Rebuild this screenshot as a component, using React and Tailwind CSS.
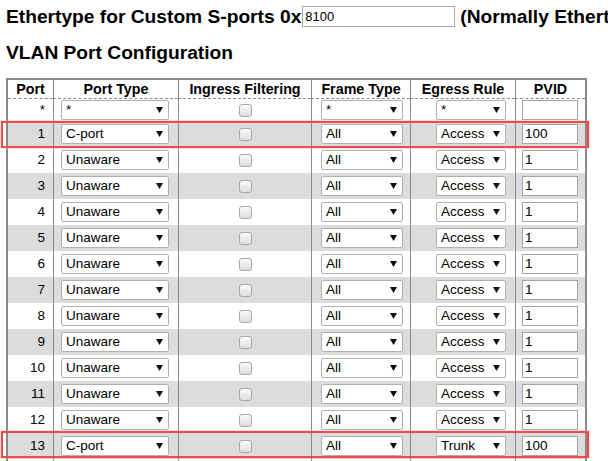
const rows = [
  { port: 1, type: 'C-port', frame: 'All', egress: 'Access', pvid: '100', mark: true },
  { port: 2, type: 'Unaware', frame: 'All', egress: 'Access', pvid: '1' },
  { port: 3, type: 'Unaware', frame: 'All', egress: 'Access', pvid: '1' },
  { port: 4, type: 'Unaware', frame: 'All', egress: 'Access', pvid: '1' },
  { port: 5, type: 'Unaware', frame: 'All', egress: 'Access', pvid: '1' },
  { port: 6, type: 'Unaware', frame: 'All', egress: 'Access', pvid: '1' },
  { port: 7, type: 'Unaware', frame: 'All', egress: 'Access', pvid: '1' },
  { port: 8, type: 'Unaware', frame: 'All', egress: 'Access', pvid: '1' },
  { port: 9, type: 'Unaware', frame: 'All', egress: 'Access', pvid: '1' },
  { port: 10, type: 'Unaware', frame: 'All', egress: 'Access', pvid: '1' },
  { port: 11, type: 'Unaware', frame: 'All', egress: 'Access', pvid: '1' },
  { port: 12, type: 'Unaware', frame: 'All', egress: 'Access', pvid: '1' },
  { port: 13, type: 'C-port', frame: 'All', egress: 'Trunk', pvid: '100', mark: true },
  { port: 14, type: 'Unaware', frame: 'All', egress: 'Access', pvid: '1' },
  { port: 15, type: 'Unaware', frame: 'All', egress: 'Access', pvid: '1' },
]

function Select({ value, width }) {
  return (
    <div className={`relative inline-block h-[20px] ${width}`}>
      <div className="h-full w-full rounded-[2px] border border-[#b0b0b0] bg-white pl-[4px] text-[13.5px] leading-[18px] text-black">
        {value}
      </div>
      <svg className="absolute right-[6px] top-[7px]" width="7" height="6" viewBox="0 0 7 6">
        <polygon points="0,0 7,0 3.5,6" fill="#111" />
      </svg>
    </div>
  )
}

function Check() {
  return (
    <div className="mx-auto h-[13px] w-[13px] rounded-[3px] border border-[#a8a8a8] bg-gradient-to-b from-[#fafafa] to-[#dedede]"></div>
  )
}

function Pvid({ value }) {
  return (
    <div className="h-[20px] w-[56px] border border-[#a4a4a4] bg-white pl-[2px] text-[13.5px] leading-[18px] text-black">
      {value}
    </div>
  )
}

export default function App() {
  return (
    <div className="relative h-[461px] w-[608px] overflow-hidden bg-white font-['Liberation_Sans',Arial,sans-serif] text-black">
      <div className="flex items-center whitespace-nowrap pl-[6px] pt-[6px] text-[19.2px] font-bold leading-[21px]">
        <span>Ethertype for Custom S-ports 0x</span>
        <div className="ml-[1px] h-[21px] w-[153px] shrink-0 border border-[#a9a9a9] bg-white pl-[2px] text-[13px] font-normal leading-[19px]">
          8100
        </div>
        <span className="ml-[5px]">(Normally Ethertype 0x88A8)</span>
      </div>

      <div className="mt-[15px] pl-[6px] text-[19.2px] font-bold leading-[22px]">VLAN Port Configuration</div>

      <table className="ml-[6px] mt-[14px] w-[581px] table-fixed border-separate border-spacing-0 border-2 border-[#8a8a8a] text-[13.5px]">
        <colgroup>
          <col className="w-[45px]" />
          <col className="w-[125px]" />
          <col className="w-[133px]" />
          <col className="w-[99px]" />
          <col className="w-[105px]" />
          <col className="w-[70px]" />
        </colgroup>
        <thead>
          <tr className="h-[19px] text-[14.3px] font-bold leading-[17px]">
            <th className="border-b border-dashed border-[#8a8a8a] text-center">Port</th>
            <th className="border-b border-l border-b-[#8a8a8a] border-l-[#8a8a8a] border-dashed text-center [border-left-style:solid]">Port Type</th>
            <th className="border-b border-l border-b-[#8a8a8a] border-l-[#8a8a8a] border-dashed text-center [border-left-style:solid]">Ingress Filtering</th>
            <th className="border-b border-l border-b-[#8a8a8a] border-l-[#8a8a8a] border-dashed text-center [border-left-style:solid]">Frame Type</th>
            <th className="border-b border-l border-b-[#8a8a8a] border-l-[#8a8a8a] border-dashed text-center [border-left-style:solid]">Egress Rule</th>
            <th className="border-b border-l border-b-[#8a8a8a] border-l-[#8a8a8a] border-dashed text-center [border-left-style:solid]">PVID</th>
          </tr>
        </thead>
        <tbody>
          <tr className="h-[22px] bg-white">
            <td className="pr-[8px] text-right align-middle">*</td>
            <td className="border-l border-[#8a8a8a] pl-[7px] align-middle"><Select value="*" width="w-[108px]" /></td>
            <td className="border-l border-[#8a8a8a] align-middle"><Check /></td>
            <td className="border-l border-[#8a8a8a] pl-[9px] align-middle"><Select value="*" width="w-[82px]" /></td>
            <td className="border-l border-[#8a8a8a] pl-[25px] align-middle"><Select value="*" width="w-[70px]" /></td>
            <td className="border-l border-[#8a8a8a] pl-[6px] align-middle"><Pvid value="" /></td>
          </tr>
          {rows.map((r) => (
            <tr key={r.port} className={`h-[26px] ${r.port % 2 === 1 ? 'bg-[#dcdcdc]' : 'bg-white'}`}>
              <td className="pr-[8px] text-right align-middle">{r.port}</td>
              <td className="border-l border-[#8a8a8a] pl-[7px] align-middle"><Select value={r.type} width="w-[108px]" /></td>
              <td className="border-l border-[#8a8a8a] align-middle"><Check /></td>
              <td className="border-l border-[#8a8a8a] pl-[9px] align-middle"><Select value={r.frame} width="w-[82px]" /></td>
              <td className="border-l border-[#8a8a8a] pl-[25px] align-middle"><Select value={r.egress} width="w-[70px]" /></td>
              <td className="border-l border-[#8a8a8a] pl-[6px] align-middle"><Pvid value={r.pvid} /></td>
            </tr>
          ))}
        </tbody>
      </table>

      {/* highlight annotations */}
      <div className="pointer-events-none absolute left-[1px] top-[121px] h-[27px] w-[588px] border-2 border-[#ef4b4b] shadow-[0_0_2px_#f7a0a0]"></div>
      <div className="pointer-events-none absolute left-[1px] top-[431px] h-[27px] w-[588px] border-2 border-[#ef4b4b] shadow-[0_0_2px_#f7a0a0]"></div>
    </div>
  )
}
